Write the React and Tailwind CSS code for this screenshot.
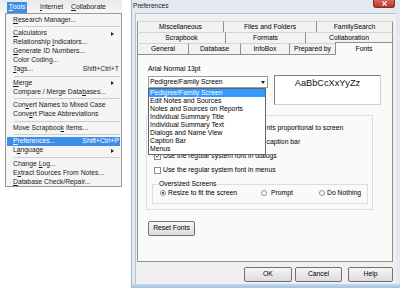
import React from 'react';

const U = ({ children }) => <span className="underline decoration-[0.6px] underline-offset-[1px]">{children}</span>;

const MenuItem = ({ children, shortcut, arrow, active }) => (
  <div className={`h-[9px] mx-[1px] pl-[6px] pr-[1px] flex items-center justify-between ${active ? 'bg-[#3d8ee6] text-white' : 'text-[#1b1b1b]'}`}>
    <span className="whitespace-nowrap">{children}</span>
    {shortcut && <span className="whitespace-nowrap">{shortcut}</span>}
    {arrow && <span className="w-0 h-0 mr-[5px] border-y-[2.5px] border-y-transparent border-l-[3px] border-l-[#222]" />}
  </div>
);

const Sep = () => (
  <div className="h-[4.5px] flex items-center pl-[7px] mx-[1px]">
    <div className="w-full border-t border-[#cdcdcd]" />
  </div>
);

const Tab = ({ children, w, last }) => (
  <div className={`${w} h-[11px] flex items-center justify-center border-t border-t-[#d4d4d4] border-l border-l-[#8f8f8f] bg-[#f2f2f2] ${last ? 'border-r border-r-[#8f8f8f]' : ''}`}>
    {children}
  </div>
);

const Check = ({ checked }) => (
  <span className="w-[7px] h-[7px] border border-[#8e8f8f] bg-white flex items-center justify-center shrink-0">
    {checked && (
      <svg viewBox="0 0 7 7" className="w-[6px] h-[6px]">
        <path d="M1 3.5 L2.8 5.3 L6 1.5" stroke="#222" strokeWidth="1.2" fill="none" />
      </svg>
    )}
  </span>
);

const Radio = ({ checked }) => (
  <span className="w-[6px] h-[6px] rounded-full border border-[#8e8f8f] bg-white flex items-center justify-center shrink-0">
    {checked && <span className="w-[2px] h-[2px] rounded-full bg-[#222]" />}
  </span>
);

const Btn = ({ children, className }) => (
  <div className={`h-[15px] rounded-[2px] border border-[#707070] bg-gradient-to-b from-[#f6f6f6] to-[#dcdcdc] flex items-center justify-center ${className}`}>
    {children}
  </div>
);

const listItems = [
  'Pedigree/Family Screen',
  'Edit Notes and Sources',
  'Notes and Sources on Reports',
  'Individual Summary Title',
  'Individual Summary Text',
  'Dialogs and Name View',
  'Caption Bar',
  'Menus',
];

export default function App() {
  return (
    <div className="relative w-[400px] h-[291px] bg-white overflow-hidden text-[6.8px] leading-none text-black" style={{ fontFamily: '"Liberation Sans", Arial, sans-serif' }}>
      {/* Menu bar */}
      <div className="absolute left-0 top-0 w-[122px] h-[13px] bg-gradient-to-b from-[#e9e9e9] to-[#f7f7f7] flex items-end text-[#1b1b1b]">
        <div className="ml-[7px] w-[20px] h-[11px] bg-[#3d8ee6] text-white flex items-center justify-center"><U>T</U>ools</div>
        <div className="ml-[13px] h-[11px] flex items-center"><U>I</U>nternet</div>
        <div className="ml-[8px] h-[11px] flex items-center"><U>C</U>ollaborate</div>
      </div>

      {/* Tools menu */}
      <div className="absolute left-[5px] top-[13px] w-[117px] h-[174px] bg-[#f5f5f5] border border-[#979797] pt-[1.5px]">
        <MenuItem><U>R</U>esearch Manager...</MenuItem>
        <Sep />
        <MenuItem arrow><U>C</U>alculators</MenuItem>
        <MenuItem>Relationship <U>I</U>ndicators...</MenuItem>
        <MenuItem><U>G</U>enerate ID Numbers...</MenuItem>
        <MenuItem>Color Coding...</MenuItem>
        <MenuItem shortcut="Shift+Ctrl+T"><U>T</U>ags...</MenuItem>
        <Sep />
        <MenuItem arrow><U>M</U>erge</MenuItem>
        <MenuItem>Compare / Merge Data<U>b</U>ases...</MenuItem>
        <Sep />
        <MenuItem>Con<U>v</U>ert Names to Mixed Case</MenuItem>
        <MenuItem>Conv<U>e</U>rt Place Abbreviations</MenuItem>
        <Sep />
        <MenuItem>Move Scrapboo<U>k</U> Items...</MenuItem>
        <Sep />
        <MenuItem active shortcut="Shift+Ctrl+P"><U>P</U>references...</MenuItem>
        <MenuItem arrow>L<U>a</U>nguage</MenuItem>
        <Sep />
        <MenuItem>Change <U>L</U>og...</MenuItem>
        <MenuItem>E<U>x</U>tract Sources From Notes...</MenuItem>
        <MenuItem><U>D</U>atabase Check/Repair...</MenuItem>
      </div>

      {/* Preferences dialog */}
      <div className="absolute left-[131px] top-0 w-[269px] h-[288px] bg-[#e3e9f0] border-l border-[#a9b6c4] flex flex-col">
        <div className="relative h-[13px] flex items-center pl-[1px] text-[6.6px] text-[#1b1b1b]">
          Preferences
          <div className="absolute right-[5px] top-0 w-[22px] h-[8px] rounded-b-[3px] bg-gradient-to-b from-[#d9665c] to-[#b8362c] border border-t-0 border-[#8a2a22] flex items-center justify-center">
            <svg viewBox="0 0 8 6" className="w-[7px] h-[5px]">
              <path d="M1.5 0.5 L6.5 5.5 M6.5 0.5 L1.5 5.5" stroke="#fff" strokeWidth="1.4" />
            </svg>
          </div>
        </div>

        <div className="ml-[3px] mr-[4px] h-[271px] bg-[#f0f0f0] border-l border-t border-[#b7c1cc] pt-[7px]">
          {/* Tab rows */}
          <div className="ml-[1px] flex">
            <Tab w="w-[86px]">Miscellaneous</Tab>
            <Tab w="w-[93px]">Files and Folders</Tab>
            <Tab w="w-[77px]" last>FamilySearch</Tab>
          </div>
          <div className="ml-[1px] flex">
            <Tab w="w-[88px]">Scrapbook</Tab>
            <Tab w="w-[80px]">Formats</Tab>
            <Tab w="w-[88px]" last>Collaboration</Tab>
          </div>
          <div className="ml-[1px] flex">
            <Tab w="w-[51px]">General</Tab>
            <Tab w="w-[52px]">Database</Tab>
            <Tab w="w-[49px]">InfoBox</Tab>
            <Tab w="w-[46px]">Prepared by</Tab>
            <div className="relative z-10 w-[58px] h-[13px] -mt-[1px] -mb-[1px] border-t border-l border-r border-[#8f8f8f] bg-[#fafafa] flex justify-center pt-[2.5px]">
              Fonts
            </div>
          </div>

          {/* Tab panel */}
          <div className="relative ml-[1px] w-[256px] h-[208px] border border-[#8f8f8f] bg-[#fafafa] pt-[10px]">
            <div className="ml-[10px] h-[9px] flex items-center">Arial Normal 13pt</div>
            <div className="ml-[10px] mt-[2px] flex items-start">
              <div className="w-[120px] h-[12px] bg-white border border-[#9a9ca3] flex items-center justify-between pl-[1px] pr-[2px]">
                <span>Pedigree/Family Screen</span>
                <span className="w-0 h-0 border-x-[2.5px] border-x-transparent border-t-[3px] border-t-[#222]" />
              </div>
              <div className="ml-[6px] -mt-[1px] w-[107px] h-[30px] bg-white border border-[#d0d0d0] border-t-[#7d7d7d] border-l-[#7d7d7d] flex justify-center pt-[3px] text-[9.2px] text-[#111]">
                AaBbCcXxYyZz
              </div>
            </div>

            {/* Options group */}
            <div className="ml-[8px] mt-[10px] w-[227px] border border-[#d5dfe5] pt-[5px] pb-[5px]">
              <div className="h-[14px] flex items-center pl-[7px] gap-[2px]">
                <Check /><span><span className="invisible">Automatically scale window and fo</span>nts proportional to screen</span>
              </div>
              <div className="h-[14px] flex items-center pl-[7px] gap-[2px]">
                <Check /><span><span className="invisible">Use the regular system font in the </span>caption bar</span>
              </div>
              <div className="h-[14px] flex items-center pl-[7px] gap-[2px]">
                <Check checked /><span>Use the regular system font in dialogs</span>
              </div>
              <div className="h-[14px] flex items-center pl-[7px] gap-[2px]">
                <Check /><span>Use the regular system font in menus</span>
              </div>
              <div className="relative ml-[5px] mt-[7px] w-[216px] h-[20px] border border-[#d5dfe5] pt-[4px]">
                <span className="absolute -top-[4px] left-[5px] px-[1px] bg-[#fafafa]">Oversized Screens</span>
                <div className="flex items-center h-[8px] pl-[7px]">
                  <div className="w-[101px] flex items-center gap-[2px]"><Radio checked /><span>Resize to fit the screen</span></div>
                  <div className="w-[58px] flex items-center gap-[4px]"><Radio /><span>Prompt</span></div>
                  <div className="flex items-center gap-[2px]"><Radio /><span>Do Nothing</span></div>
                </div>
              </div>
            </div>

            <Btn className="ml-[10px] mt-[11px] w-[47px] h-[14px]">Reset Fonts</Btn>

            {/* Open dropdown list */}
            <div className="absolute left-[10px] top-[33px] w-[118px] bg-white border border-[#646464]">
              {listItems.map((item, i) => (
                <div key={item} className={`h-[8.1px] flex items-center pl-[1px] ${i === 0 ? 'bg-[#3399ff] text-white' : ''}`}>
                  {item}
                </div>
              ))}
            </div>
          </div>

          {/* Dialog buttons */}
          <div className="mt-[5px] flex justify-end pr-[3px]">
            <Btn className="w-[48px] mr-[3px]">OK</Btn>
            <Btn className="w-[47px] mr-[6px]">Cancel</Btn>
            <Btn className="w-[45px]">Help</Btn>
          </div>
        </div>
        <div className="flex-1 bg-gradient-to-b from-[#c7d8ea] to-[#9fc2e6]" />
      </div>
    </div>
  );
}
